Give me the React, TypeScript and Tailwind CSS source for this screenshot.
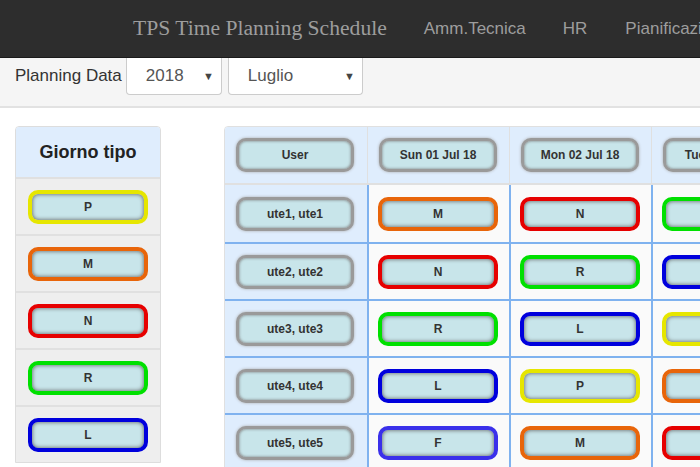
import React from "react";

const C: Record<string, string> = {
  P: "border-[#e6e600]",
  M: "border-[#e8650a]",
  N: "border-[#e60000]",
  R: "border-[#00e000]",
  L: "border-[#0000dd]",
  F: "border-[#3a30ea]",
};

function Shift({ s }: { s: string }) {
  return (
    <div
      className={`w-[120px] shrink-0 h-[34px] rounded-[10px] border-4 ${C[s]} bg-[#c8e5ea] shadow-[inset_0_0_4px_#555] flex items-center justify-center text-[12px] font-bold text-[#333]`}
    >
      {s}
    </div>
  );
}

function Gray({ t }: { t: string }) {
  return (
    <div className="w-[118px] shrink-0 h-[34px] rounded-[10px] border-[3px] border-[#9a9a9a] bg-[#c8e5ea] shadow-[0_0_3px_#aaa,inset_0_0_3px_#777] flex items-center justify-center text-[12px] font-bold text-[#333] whitespace-nowrap overflow-hidden">
      {t}
    </div>
  );
}

const rows: [string, string[]][] = [
  ["ute1, ute1", ["M", "N", "R"]],
  ["ute2, ute2", ["N", "R", "L"]],
  ["ute3, ute3", ["R", "L", "P"]],
  ["ute4, ute4", ["L", "P", "M"]],
  ["ute5, ute5", ["F", "M", "N"]],
];

export default function App() {
  return (
    <div
      className="w-[700px] h-[467px] overflow-hidden bg-white relative"
      style={{ fontFamily: '"Liberation Sans", Arial, sans-serif' }}
    >
      <div className="h-[58px] bg-[#2d2d2d] flex items-center whitespace-nowrap border-b border-[#1a1a1a]">
        <div
          className="ml-[133px] shrink-0 text-[21.6px] text-[#9d9d9d]"
          style={{ fontFamily: '"Liberation Serif", "Times New Roman", serif' }}
        >
          TPS Time Planning Schedule
        </div>
        <div className="ml-[37px] shrink-0 text-[17px] text-[#9d9d9d]">Amm.Tecnica</div>
        <div className="ml-[37px] shrink-0 text-[17px] text-[#9d9d9d]">HR</div>
        <div className="ml-[38px] shrink-0 text-[17px] text-[#9d9d9d]">Pianificazione</div>
      </div>
      <div className="h-[50px] bg-[#f5f5f5] border-b-2 border-[#e2e2e2] flex items-start">
        <div className="ml-[15px] mt-[5px] shrink-0 text-[17px] text-[#333]">Planning Data</div>
        <div className="ml-[4px] shrink-0 w-[96px] h-[37px] bg-white border border-[#ccc] border-t-0 rounded-b-[4px] flex items-center text-[17px] text-[#555]">
          <span className="ml-[19px]">2018</span>
          <span className="ml-auto mr-[7px] text-[11px] text-[#444]">▼</span>
        </div>
        <div className="ml-[6px] shrink-0 w-[135px] h-[37px] bg-white border border-[#ccc] border-t-0 rounded-b-[4px] flex items-center text-[17px] text-[#555]">
          <span className="ml-[19px]">Luglio</span>
          <span className="ml-auto mr-[7px] text-[11px] text-[#444]">▼</span>
        </div>
      </div>
      <div className="flex items-start mt-[18px]">
        <div className="ml-[15px] shrink-0 w-[146px] border border-[#dddddd] rounded-t-[4px] overflow-hidden">
          <div className="h-[50px] bg-[#dfedfd] flex items-center justify-center text-[18px] font-bold text-[#222]">
            Giorno tipo
          </div>
          {["P", "M", "N", "R", "L"].map((s) => (
            <div key={s} className="h-[57px] bg-[#eeeeee] border-t-2 border-[#e0e0e0] flex items-center justify-center">
              <Shift s={s} />
            </div>
          ))}
        </div>
        <div className="ml-[63px] shrink-0 border border-[#e0e0e0] rounded-t-[4px] overflow-hidden">
          <div className="flex h-[58px] bg-[#dfedfd] border-b-2 border-[#e0e0e0]">
            {["User", "Sun 01 Jul 18", "Mon 02 Jul 18", "Tue 03 Jul 18"].map((t, i) => (
              <div
                key={t}
                className={`w-[142px] shrink-0 flex items-center pl-[11px] ${i > 0 ? "border-l border-[#e0e0e0]" : ""}`}
              >
                <Gray t={t} />
              </div>
            ))}
          </div>
          {rows.map(([u, ss], r) => (
            <div key={u} className={`flex h-[57px] ${r > 0 ? "border-t-2 border-[#7fb2ef]" : ""}`}>
              <div className="w-[142px] shrink-0 bg-[#dfedfd] flex items-center pl-[11px]">
                <Gray t={u} />
              </div>
              {ss.map((s, i) => (
                <div key={i} className="w-[142px] shrink-0 bg-[#fafafa] border-l-2 border-[#7fb2ef] flex items-center pl-[9px]">
                  <Shift s={s} />
                </div>
              ))}
            </div>
          ))}
        </div>
      </div>
    </div>
  );
}
